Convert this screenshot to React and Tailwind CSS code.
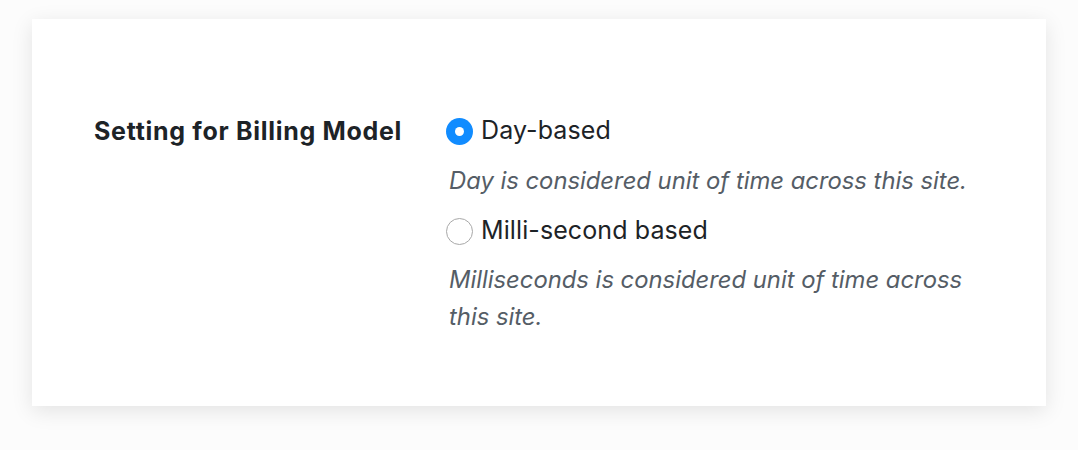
export default function App() {
  return (
    <div className="w-[1078px] h-[450px] bg-[#fcfcfc] pt-[19px] pl-[32px]" style={{ fontFamily: 'Inter, "Noto Sans", sans-serif' }}>
      <div className="w-[1014px] h-[387px] bg-white shadow-[0_5px_20px_rgba(0,0,0,0.10)] flex pt-[93px] pl-[62px]">
        <div className="w-[352px] text-[25px] font-bold text-[#1d2327] leading-[38px] tracking-[0.7px]">Setting for Billing Model</div>
        <div className="flex flex-col w-[545px]">
          <label className="flex items-center gap-[8px] h-[38px]">
            <span className="w-[27px] h-[27px] rounded-full bg-[#118cff] flex items-center justify-center">
              <span className="w-[9px] h-[9px] rounded-full bg-white" />
            </span>
            <span className="text-[25px] text-[#1d2327] tracking-[0.1px]">Day-based</span>
          </label>
          <p className="text-[23.8px] italic text-[#555d66] leading-[37px] mt-[12px] pl-[3px]">Day is considered unit of time across this site.</p>
          <label className="flex items-center gap-[8px] h-[38px] mt-[13px]">
            <span className="w-[27px] h-[27px] rounded-full bg-white border-[1.5px] border-[#a8a8a8]" />
            <span className="text-[25px] text-[#1d2327] tracking-[0.1px]">Milli-second based</span>
          </label>
          <p className="text-[23.8px] italic text-[#555d66] leading-[37px] mt-[11px] pl-[3px]">Milliseconds is considered unit of time across this site.</p>
        </div>
      </div>
    </div>
  );
}
